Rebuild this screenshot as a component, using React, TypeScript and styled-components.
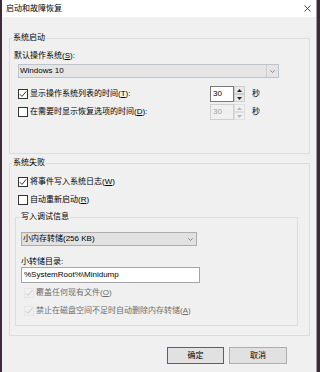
import styled, { createGlobalStyle } from "styled-components";

const Global = createGlobalStyle`
  html, body {
    margin: 0;
    padding: 0;
  }
  body {
    background: #3b2b36;
    font-family: "Liberation Sans", "Noto Sans CJK SC", sans-serif;
    font-size: 8px;
    line-height: 10px;
    color: #000;
  }
`;

const Screen = styled.div`
  display: flex;
  width: 320px;
  height: 372px;
  overflow: hidden;
`;

const Dialog = styled.div`
  box-sizing: border-box;
  display: flex;
  flex-direction: column;
  width: 315px;
  height: 372px;
  margin-left: 2px;
  background: #f0f0f0;
  border-right: 1px solid #9c9c9c;
`;

const TitleBar = styled.div`
  display: flex;
  align-items: center;
  justify-content: space-between;
  height: 17px;
  padding: 0 5px 0 4px;
  background: #fff;
`;

const Body = styled.div`
  padding: 0 6px 0 7px;
`;

const Group = styled.fieldset<{ $top: number; $inset?: number }>`
  margin: ${(p) => p.$top}px ${(p) => p.$inset ?? 0}px 0 0;
  padding: 0;
  min-width: 0;
  border: 1px solid #dcdcdc;
`;

const Legend = styled.legend<{ $shift: number }>`
  margin-left: ${(p) => p.$shift}px;
  padding: 0 1px;
  height: 10px;
  line-height: 10px;
`;

const GroupContent = styled.div<{ $pad: string }>`
  display: flex;
  flex-direction: column;
  align-items: flex-start;
  padding: ${(p) => p.$pad};
`;

const Label = styled.div<{ $top?: number }>`
  height: 10px;
  margin-top: ${(p) => p.$top ?? 0}px;
  white-space: nowrap;
`;

const Combo = styled.div<{ $width: number; $top: number; $split?: boolean }>`
  box-sizing: border-box;
  display: flex;
  align-items: center;
  width: ${(p) => p.$width}px;
  height: 14px;
  margin-top: ${(p) => p.$top}px;
  margin-left: ${(p) => (p.$split ? 4 : 0)}px;
  background: ${(p) => (p.$split ? "#e5e5e5" : "#e1e1e1")};
  border: 1px solid ${(p) => (p.$split ? "#bcc3c9" : "#adadad")};
`;

const ComboText = styled.div`
  flex: 1;
  padding-left: 1px;
  white-space: nowrap;
`;

const ComboArrow = styled.div<{ $split?: boolean }>`
  display: flex;
  align-items: center;
  justify-content: center;
  width: 11px;
  height: 100%;
  border-left: 1px solid ${(p) => (p.$split ? "#c9ced2" : "transparent")};
`;

const SpinRow = styled.div<{ $top: number }>`
  display: flex;
  align-items: center;
  width: 242px;
  height: 16px;
  margin-top: ${(p) => p.$top}px;
  margin-left: 4px;
`;

const CheckRow = styled.div<{ $top?: number; $disabled?: boolean }>`
  display: flex;
  align-items: center;
  gap: 2px;
  height: 12px;
  margin-top: ${(p) => p.$top ?? 0}px;
  margin-left: 3px;
  color: ${(p) => (p.$disabled ? "#6d6d6d" : "#000")};
  white-space: nowrap;
`;

const CheckLabel = styled.div`
  display: flex;
  flex: 1;
  align-items: center;
  gap: 2px;
  white-space: nowrap;
`;

const Box = styled.div<{ $disabled?: boolean }>`
  box-sizing: border-box;
  display: flex;
  align-items: center;
  justify-content: center;
  width: 10px;
  height: 10px;
  background: ${(p) => (p.$disabled ? "transparent" : "#fff")};
  border: 1px solid ${(p) => (p.$disabled ? "#e6e6e6" : "#333")};
`;

const Spinner = styled.div`
  display: flex;
  height: 16px;
`;

const SpinField = styled.div<{ $disabled?: boolean }>`
  box-sizing: border-box;
  display: flex;
  align-items: center;
  width: 24px;
  height: 16px;
  padding-left: 2px;
  background: ${(p) => (p.$disabled ? "#f0f0f0" : "#fff")};
  border: 1px solid ${(p) => (p.$disabled ? "#cfcfcf" : "#7a7a7a")};
  color: ${(p) => (p.$disabled ? "#a0a0a0" : "#000")};
`;

const SpinButtons = styled.div`
  display: flex;
  flex-direction: column;
  width: 11px;
  height: 16px;
`;

const SpinButton = styled.div<{ $disabled?: boolean }>`
  box-sizing: border-box;
  display: flex;
  align-items: center;
  justify-content: center;
  height: 8px;
  background: ${(p) => (p.$disabled ? "#f0f0f0" : "#e9e9e9")};
  border: 1px solid ${(p) => (p.$disabled ? "#dedede" : "#cdcdcd")};
`;

const Unit = styled.div`
  margin-left: 7px;
`;

const TextInput = styled.div`
  box-sizing: border-box;
  display: flex;
  align-items: center;
  width: 179px;
  height: 16px;
  padding-left: 2px;
  background: #fff;
  border: 1px solid #a5a5a5;
`;

const Buttons = styled.div`
  display: flex;
  justify-content: flex-end;
  gap: 5px;
  margin-top: 11px;
  padding-right: 23px;
`;

const Button = styled.div<{ $primary?: boolean; $width: number }>`
  box-sizing: border-box;
  display: flex;
  align-items: center;
  justify-content: center;
  width: ${(p) => p.$width}px;
  height: 17px;
  background: #e1e1e1;
  border: 1px solid ${(p) => (p.$primary ? "#0078d7" : "#adadad")};
`;

function Close() {
  return (
    <svg width="7" height="7" viewBox="0 0 7 7">
      <path d="M0.5 0.5 L6.5 6.5 M6.5 0.5 L0.5 6.5" stroke="#333" strokeWidth="0.9" />
    </svg>
  );
}

function Chevron() {
  return (
    <svg width="5" height="3" viewBox="0 0 5 3">
      <path d="M0.3 0.3 L2.5 2.5 L4.7 0.3" stroke="#707070" strokeWidth="0.8" fill="none" />
    </svg>
  );
}

function Tick({ color }: { color: string }) {
  return (
    <svg width="8" height="8" viewBox="0 0 8 8">
      <path d="M0.8 4.2 L3 6.4 L7.3 1.3" stroke={color} strokeWidth="0.9" fill="none" />
    </svg>
  );
}

function Arrow({ up, color }: { up?: boolean; color: string }) {
  return (
    <svg width="5" height="3" viewBox="0 0 5 3">
      <path d={up ? "M0 3 L2.5 0 L5 3 Z" : "M0 0 L2.5 3 L5 0 Z"} fill={color} />
    </svg>
  );
}

function Check({ checked, disabled }: { checked?: boolean; disabled?: boolean }) {
  return (
    <Box $disabled={disabled}>
      {checked && <Tick color={disabled ? "#c4c4c4" : "#222"} />}
    </Box>
  );
}

function Spin({ value, disabled }: { value: string; disabled?: boolean }) {
  const arrow = disabled ? "#b8b8b8" : "#222";
  return (
    <Spinner>
      <SpinField $disabled={disabled}>{value}</SpinField>
      <SpinButtons>
        <SpinButton $disabled={disabled}>
          <Arrow up color={arrow} />
        </SpinButton>
        <SpinButton $disabled={disabled}>
          <Arrow color={arrow} />
        </SpinButton>
      </SpinButtons>
    </Spinner>
  );
}

export default function App() {
  return (
    <Screen>
      <Global />
      <Dialog>
        <TitleBar>
          <span>启动和故障恢复</span>
          <Close />
        </TitleBar>
        <Body>
          <Group $top={16}>
            <Legend $shift={2}>系统启动</Legend>
            <GroupContent $pad="8px 0 33px 4px">
              <Label>
                默认操作系统(<u>S</u>):
              </Label>
              <Combo $width={261} $top={3} $split>
                <ComboText>Windows 10</ComboText>
                <ComboArrow $split>
                  <Chevron />
                </ComboArrow>
              </Combo>
              <SpinRow $top={8}>
                <CheckLabel>
                  <Check checked />
                  <span>
                    显示操作系统列表的时间(<u>T</u>):
                  </span>
                </CheckLabel>
                <Spin value="30" />
                <Unit>秒</Unit>
              </SpinRow>
              <SpinRow $top={2}>
                <CheckLabel>
                  <Check />
                  <span>
                    在需要时显示恢复选项的时间(<u>D</u>):
                  </span>
                </CheckLabel>
                <Spin value="30" disabled />
                <Unit>秒</Unit>
              </SpinRow>
            </GroupContent>
          </Group>

          <Group $top={4}>
            <Legend $shift={2}>系统失败</Legend>
            <GroupContent $pad="8px 11px 9px 5px">
              <CheckRow>
                <Check checked />
                <span>
                  将事件写入系统日志(<u>W</u>)
                </span>
              </CheckRow>
              <CheckRow $top={6}>
                <Check />
                <span>
                  自动重新启动(<u>R</u>)
                </span>
              </CheckRow>
              <Group $top={6} style={{ alignSelf: "stretch" }}>
                <Legend $shift={4}>写入调试信息</Legend>
                <GroupContent $pad="10px 0 8px 5px">
                  <Combo $width={176} $top={0}>
                    <ComboText>小内存转储(256 KB)</ComboText>
                    <ComboArrow>
                      <Chevron />
                    </ComboArrow>
                  </Combo>
                  <Label $top={11}>小转储目录:</Label>
                  <TextInput>%SystemRoot%\Minidump</TextInput>
                  <CheckRow $top={4} $disabled>
                    <Check checked disabled />
                    <span>
                      覆盖任何现有文件(<u>O</u>)
                    </span>
                  </CheckRow>
                  <CheckRow $top={6} $disabled>
                    <Check checked disabled />
                    <span>
                      禁止在磁盘空间不足时自动删除内存转储(<u>A</u>)
                    </span>
                  </CheckRow>
                </GroupContent>
              </Group>
            </GroupContent>
          </Group>

          <Buttons>
            <Button $primary $width={57}>
              确定
            </Button>
            <Button $width={58}>取消</Button>
          </Buttons>
        </Body>
      </Dialog>
    </Screen>
  );
}
